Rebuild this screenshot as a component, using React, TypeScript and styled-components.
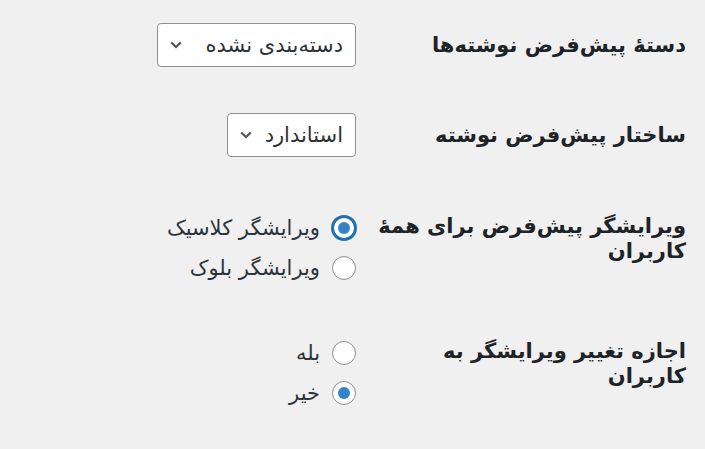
import React from "react";
import styled, { createGlobalStyle } from "styled-components";

const GlobalStyle = createGlobalStyle`
  html, body { margin: 0; padding: 0; background: #f0f0f1; }
  body { font-family: "DejaVu Sans", sans-serif; color: #1d2327; }
`;

const Page = styled.div`
  direction: rtl;
  padding: 0 19px 0 0;
`;

const Row = styled.div<{ $pt: number; $pb: number }>`
  display: grid;
  grid-template-columns: 300px 1fr;
  align-items: start;
  padding-top: ${(p) => p.$pt}px;
  padding-bottom: ${(p) => p.$pb}px;
`;

const Th = styled.div<{ $mt: number }>`
  font-size: 21px;
  font-weight: bold;
  line-height: 25px;
  white-space: nowrap;
  margin-top: ${(p) => p.$mt}px;
`;

const Td = styled.div`
  padding-right: 30px;
  display: flex;
  flex-direction: column;
  align-items: flex-start;
`;

const SelectBox = styled.div<{ $width?: number }>`
  box-sizing: border-box;
  height: 44px;
  width: ${(p) => (p.$width ? `${p.$width}px` : "auto")};
  display: flex;
  align-items: center;
  justify-content: space-between;
  gap: 13px;
  padding: 0 12px 0 12px;
  background: #fff;
  border: 1px solid #8c8f94;
  border-radius: 4px;
  font-size: 21px;
  color: #2c3338;
`;

const Chevron = () => (
  <svg width="12" height="8" viewBox="0 0 12 8">
    <path d="M1.2 1.5 L6 6 L10.8 1.5" fill="none" stroke="#50575e" strokeWidth="2.2" />
  </svg>
);

const RadioLine = styled.label`
  height: 40px;
  display: flex;
  align-items: center;
  gap: 12px;
  font-size: 21px;
  color: #2c3338;
`;

const Radio = styled.span<{ $checked?: boolean; $focus?: boolean }>`
  box-sizing: border-box;
  width: 24px;
  height: 24px;
  border-radius: 50%;
  background: #fff;
  border: ${(p) => (p.$focus ? "2px solid #2271b1" : "1px solid #8c8f94")};
  box-shadow: ${(p) => (p.$focus ? "0 0 0 1px #2271b1" : "none")};
  display: flex;
  align-items: center;
  justify-content: center;
  flex-shrink: 0;
  &::after {
    content: "";
    display: ${(p) => (p.$checked ? "block" : "none")};
    width: 12px;
    height: 12px;
    border-radius: 50%;
    background: #3582c4;
  }
`;

export default function App() {
  return (
    <>
      <GlobalStyle />
      <Page>
        <Row $pt={23} $pb={23}>
          <Th $mt={10}>دستهٔ پیش‌فرض نوشته‌ها</Th>
          <Td>
            <SelectBox $width={199}>
              <span>دسته‌بندی نشده</span>
              <Chevron />
            </SelectBox>
          </Td>
        </Row>
        <Row $pt={23} $pb={23}>
          <Th $mt={10}>ساختار پیش‌فرض نوشته</Th>
          <Td>
            <SelectBox>
              <span>استاندارد</span>
              <Chevron />
            </SelectBox>
          </Td>
        </Row>
        <Row $pt={28} $pb={25}>
          <Th $mt={6}>
            ویرایشگر پیش‌فرض برای همهٔ
            <br />
            کاربران
          </Th>
          <Td>
            <RadioLine>
              <Radio $checked $focus />
              ویرایشگر کلاسیک
            </RadioLine>
            <RadioLine>
              <Radio />
              ویرایشگر بلوک
            </RadioLine>
          </Td>
        </Row>
        <Row $pt={20} $pb={20}>
          <Th $mt={6}>
            اجازه تغییر ویرایشگر به
            <br />
            کاربران
          </Th>
          <Td>
            <RadioLine>
              <Radio />
              بله
            </RadioLine>
            <RadioLine>
              <Radio $checked />
              خیر
            </RadioLine>
          </Td>
        </Row>
      </Page>
    </>
  );
}
